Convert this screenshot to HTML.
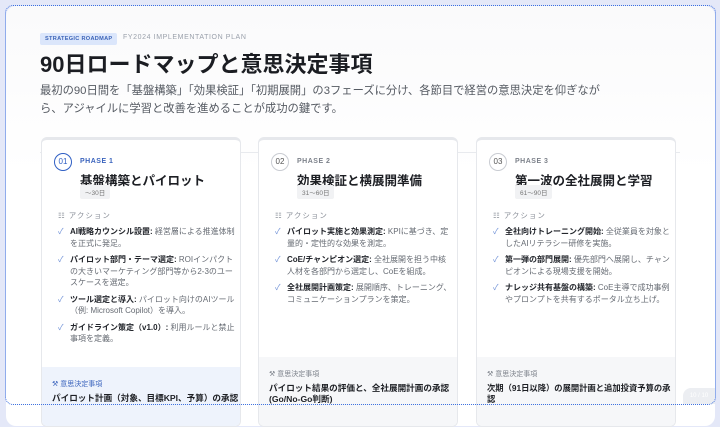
<!DOCTYPE html>
<html><head><meta charset="utf-8"><style>
*{margin:0;padding:0;box-sizing:border-box}
body{width:720px;height:409px;overflow:hidden;background:#e4e8f8;font-family:"Liberation Sans","Noto Sans CJK JP",sans-serif;position:relative}
.frame{position:absolute;left:5px;top:5px;width:711px;height:400px;border:1px dotted #3b6fe0;border-radius:8px}
.page{position:absolute;left:6px;top:6px;width:709px;height:420px;background:linear-gradient(#fafafb,#fff 40%);border-radius:10px;overflow:hidden}
.tag{position:absolute;left:34px;top:27px;background:#dbe6fb;color:#3c64b8;font-size:5.6px;font-weight:bold;letter-spacing:.3px;padding:3px 5px;border-radius:2px}
.plan{position:absolute;left:117px;top:28px;color:#9aa0ab;font-size:7px;letter-spacing:.6px}
h1{position:absolute;left:34px;top:41px;font-size:22px;font-weight:bold;color:#1b1d22;white-space:nowrap}
.desc{position:absolute;left:34px;top:76px;font-size:11.3px;line-height:18px;color:#555a62;width:570px}
.line{position:absolute;left:34px;top:146px;width:640px;height:1px;background:#e8eaee}
.card{position:absolute;top:137px;width:200px;height:290px;background:#fff;border:1px solid #e6e8ec;border-top:3px solid #e6e8ec;border-radius:6px;overflow:hidden}
.num{position:absolute;left:12px;top:13px;width:18px;height:18px;border:1px solid #c9ccd2;border-radius:50%;font-size:8px;color:#555;text-align:center;line-height:16px}
.ph{position:absolute;left:38px;top:18px;font-size:7px;font-weight:bold;color:#7c818a;letter-spacing:.5px}
.t{position:absolute;left:38px;top:30px;font-size:12.5px;font-weight:bold;color:#1d1f24;white-space:nowrap}
.d{position:absolute;left:38px;top:45px;background:#f1f2f4;color:#777;font-size:6.5px;padding:2px 5px;border-radius:2px}
.al{position:absolute;left:16px;top:70px;font-size:7.5px;color:#8a8f98;letter-spacing:1px}
ul{position:absolute;left:16px;top:86px;width:177px;list-style:none}
li{position:relative;padding-left:12px;font-size:8px;line-height:11.5px;color:#666b73}
li+li{margin-top:5px}
li b{color:#23262c;font-weight:bold}
li:before{content:"✓";position:absolute;left:0;top:0;color:#6d8fd6;font-size:8px}
.dec{position:absolute;left:0;top:217px;width:100%;height:80px;background:#f6f7f9;padding:12px 10px}
.dl{font-size:7px;color:#7c818a;margin-bottom:4px}
.dt{font-size:8.6px;font-weight:bold;color:#1d1f24;line-height:11px;white-space:nowrap}
.pg{position:absolute;left:683px;top:388px;width:32px;height:16px;background:#eceef2;border-radius:8px 0 0 0;color:#fff;font-size:6px;text-align:center;line-height:16px}
</style></head><body>
<div class="page">
<div class="tag">STRATEGIC ROADMAP</div>
<div class="plan">FY2024 IMPLEMENTATION PLAN</div>
<h1>90日ロードマップと意思決定事項</h1>
<div class="desc">最初の90日間を「基盤構築」「効果検証」「初期展開」の3フェーズに分け、各節目で経営の意思決定を仰ぎながら、アジャイルに学習と改善を進めることが成功の鍵です。</div>
<div class="line"></div>
</div>
<div class="card" style="left:41px">
<div class="num" style="border-color:#2f5fc4;color:#2f5fc4">01</div><div class="ph" style="color:#3a63bd">PHASE 1</div>
<div class="t">基盤構築とパイロット</div><div class="d">〜30日</div>
<div class="al">☷ アクション</div>
<ul><li><b>AI戦略カウンシル設置:</b> 経営層による推進体制を正式に発足。</li>
<li><b>パイロット部門・テーマ選定:</b> ROIインパクトの大きいマーケティング部門等から2-3のユースケースを選定。</li>
<li><b>ツール選定と導入:</b> パイロット向けのAIツール（例: Microsoft Copilot）を導入。</li>
<li><b>ガイドライン策定（v1.0）:</b> 利用ルールと禁止事項を定義。</li></ul>
<div class="dec" style="background:#eef3fc;top:227px"><div class="dl" style="color:#3a63bd">⚒ 意思決定事項</div><div class="dt">パイロット計画（対象、目標KPI、予算）の承認</div></div>
</div>
<div class="card" style="left:258px">
<div class="num">02</div><div class="ph">PHASE 2</div>
<div class="t">効果検証と横展開準備</div><div class="d">31〜60日</div>
<div class="al">☷ アクション</div>
<ul><li><b>パイロット実施と効果測定:</b> KPIに基づき、定量的・定性的な効果を測定。</li>
<li><b>CoE/チャンピオン選定:</b> 全社展開を担う中核人材を各部門から選定し、CoEを組成。</li>
<li><b>全社展開計画策定:</b> 展開順序、トレーニング、コミュニケーションプランを策定。</li></ul>
<div class="dec"><div class="dl">⚒ 意思決定事項</div><div class="dt">パイロット結果の評価と、全社展開計画の承認<br>(Go/No-Go判断)</div></div>
</div>
<div class="card" style="left:476px">
<div class="num">03</div><div class="ph">PHASE 3</div>
<div class="t">第一波の全社展開と学習</div><div class="d">61〜90日</div>
<div class="al">☷ アクション</div>
<ul><li><b>全社向けトレーニング開始:</b> 全従業員を対象としたAIリテラシー研修を実施。</li>
<li><b>第一弾の部門展開:</b> 優先部門へ展開し、チャンピオンによる現場支援を開始。</li>
<li><b>ナレッジ共有基盤の構築:</b> CoE主導で成功事例やプロンプトを共有するポータル立ち上げ。</li></ul>
<div class="dec"><div class="dl">⚒ 意思決定事項</div><div class="dt" style="font-size:8.3px">次期（91日以降）の展開計画と追加投資予算の承<br>認</div></div>
</div>
<div class="pg">10 / 10</div>
<div class="frame"></div>
</body></html>
